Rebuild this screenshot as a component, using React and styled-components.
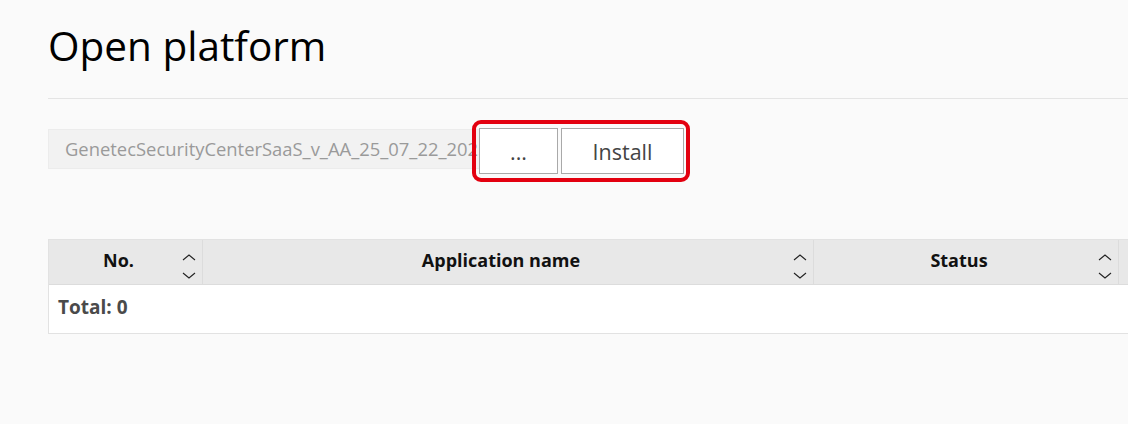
import styled, { createGlobalStyle } from 'styled-components';

const GlobalStyle = createGlobalStyle`
  html, body {
    margin: 0;
    padding: 0;
    background: #fafafa;
    font-family: 'Open Sans', 'Noto Sans', sans-serif;
    overflow: hidden;
  }
`;

const columns = [
  { key: 'no', label: 'No.', width: 154 },
  { key: 'name', label: 'Application name', width: 611 },
  { key: 'status', label: 'Status', width: 305 },
  { key: 'extra', label: '', width: 220 },
];

function SortIcon() {
  return (
    <Sorter>
      <svg width="14" height="7" viewBox="0 0 14 7">
        <path d="M1 6 L7 1 L13 6" fill="none" stroke="#222" strokeWidth="1.1" />
      </svg>
      <svg width="14" height="7" viewBox="0 0 14 7">
        <path d="M1 1 L7 6 L13 1" fill="none" stroke="#222" strokeWidth="1.1" />
      </svg>
    </Sorter>
  );
}

function App() {
  return (
    <Page>
      <GlobalStyle />
      <Title>Open platform</Title>
      <Divider />
      <UploadRow>
        <FileField>GenetecSecurityCenterSaaS_v_AA_25_07_22_2025</FileField>
        <ButtonGroup>
          <Button $width={79}>...</Button>
          <Button $width={123}>Install</Button>
        </ButtonGroup>
      </UploadRow>
      <Table>
        <HeaderRow>
          {columns.map((col) => (
            <HeaderCell key={col.key} $width={col.width}>
              {col.label}
              {col.label && <SortIcon />}
            </HeaderCell>
          ))}
        </HeaderRow>
        <FooterRow>Total: 0</FooterRow>
      </Table>
    </Page>
  );
}

export default App;

const Page = styled.div`
  width: 1128px;
  height: 424px;
  padding-left: 48px;
  box-sizing: border-box;
  overflow: hidden;
`;

const Title = styled.h1`
  margin: 0;
  padding-top: 19px;
  height: 98px;
  box-sizing: border-box;
  font-size: 40.5px;
  font-weight: 400;
  line-height: 54px;
  color: #000;
`;

const Divider = styled.div`
  height: 1px;
  background: #e4e4e4;
`;

const UploadRow = styled.div`
  display: flex;
  align-items: flex-start;
  margin-top: 21px;
`;

const FileField = styled.div`
  width: 432px;
  height: 40px;
  margin-top: 9px;
  box-sizing: border-box;
  padding-left: 16px;
  background: #f2f2f2;
  border: 1px solid #ececec;
  border-right: none;
  color: #9a9a9a;
  font-size: 18.4px;
  line-height: 38px;
  white-space: nowrap;
  overflow: hidden;
`;

const ButtonGroup = styled.div`
  display: flex;
  gap: 3px;
  margin-left: -8px;
  padding: 4px 2px 4px 3px;
  border: 4px solid #e3000f;
  border-radius: 9px;
`;

const Button = styled.button`
  width: ${(p) => p.$width}px;
  height: 46px;
  padding: 0;
  background: #fff;
  border: 1px solid #a9a9a9;
  border-radius: 0;
  color: #444;
  font-family: 'Open Sans', 'Noto Sans', sans-serif;
  font-size: 21.5px;
`;

const Table = styled.div`
  margin-top: 57px;
  width: 1300px;
  border: 1px solid #e2e2e2;
  border-right: none;
  background: #fff;
`;

const HeaderRow = styled.div`
  display: flex;
  background: #e8e8e8;
  border-bottom: 1px solid #dcdcdc;
`;

const HeaderCell = styled.div`
  position: relative;
  width: ${(p) => p.$width}px;
  height: 44px;
  box-sizing: border-box;
  padding: 0 14px 4px 0;
  border-right: 1px solid #dcdcdc;
  display: flex;
  align-items: center;
  justify-content: center;
  font-size: 18px;
  font-weight: 700;
  color: #111;
`;

const Sorter = styled.div`
  position: absolute;
  right: 6px;
  top: 14px;
  display: flex;
  flex-direction: column;
  gap: 11px;

  svg {
    display: block;
  }
`;

const FooterRow = styled.div`
  height: 48px;
  box-sizing: border-box;
  padding: 0 0 5px 9px;
  display: flex;
  align-items: center;
  font-size: 19px;
  font-weight: 700;
  color: #4a4a4a;
`;
